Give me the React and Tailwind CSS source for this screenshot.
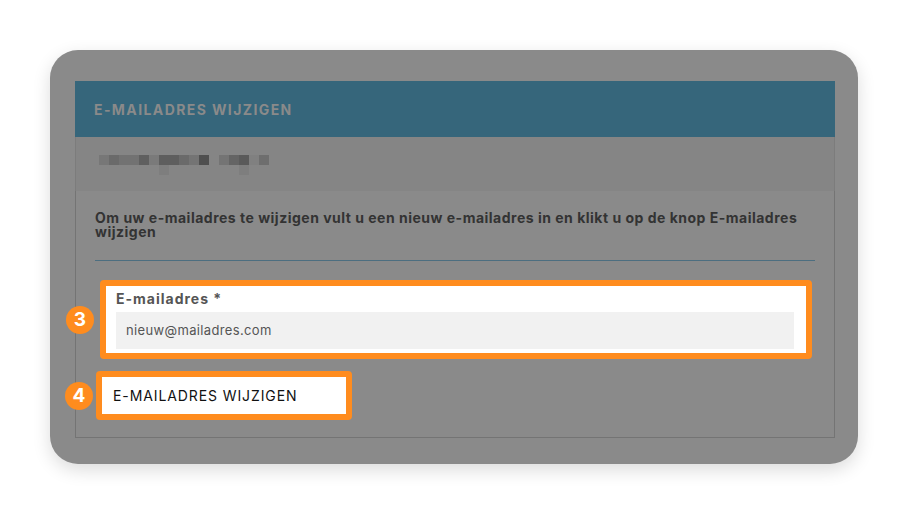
import React from "react";

const blocks1 = [
  ["w-[10px]", "bg-[#777777]"],
  ["w-[10px]", "bg-[#6a6a6a]"],
  ["w-[20px]", "bg-[#727272]"],
  ["w-[10px]", "bg-[#5f5f5f]"],
  ["w-[10px]", "bg-[#7a7a7a]"],
  ["w-[20px]", "bg-[#5e5e5e]"],
  ["w-[10px]", "bg-[#6a6a6a]"],
  ["w-[10px]", "bg-[#747474]"],
  ["w-[10px]", "bg-[#4f4f4f]"],
  ["w-[10px]", "bg-transparent"],
  ["w-[10px]", "bg-[#747474]"],
  ["w-[10px]", "bg-[#646464]"],
  ["w-[10px]", "bg-[#5a5a5a]"],
  ["w-[10px]", "bg-[#808080]"],
  ["w-[10px]", "bg-[#6e6e6e]"],
];

function Badge({ n }) {
  return (
    <div className="w-[28px] h-[28px] shrink-0 rounded-full bg-[#ff8c1e] flex items-center justify-center text-white text-[19px] font-bold leading-none font-['Inter',sans-serif]">
      {n}
    </div>
  );
}

export default function App() {
  return (
    <div className="w-[908px] h-[514px] bg-white pt-[50px] pl-[50px] font-['Inter',sans-serif]">
      <div className="w-[808px] h-[414px] rounded-[28px] bg-[#8a8a8a] shadow-[0_6px_18px_rgba(0,0,0,0.14)] pt-[31px] pl-[25px]">
        <div className="w-[760px] h-[357px] flex flex-col">
          <div className="h-[56px] bg-[#36667b] pl-[19px] flex items-center">
            <span className="text-[14px] font-bold text-[#8a8a8a] tracking-[1.4px] mt-[1px]">
              E-MAILADRES WIJZIGEN
            </span>
          </div>
          <div className="h-[54px] bg-[#858585] border-x border-[#7c7c7c] pl-[23px] pt-[18px]">
            <div className="flex h-[10px]">
              {blocks1.map(([w, c], i) => (
                <div key={i} className={`${w} h-[10px] ${c}`} />
              ))}
            </div>
            <div className="flex h-[10px]">
              <div className="w-[60px]" />
              <div className="w-[10px] h-[10px] bg-[#7e7e7e]" />
              <div className="w-[70px]" />
              <div className="w-[10px] h-[10px] bg-[#7e7e7e]" />
            </div>
          </div>
          <div className="flex-1 border-x border-b border-[#747474] px-[19px] pt-[20px]">
            <p className="text-[14px] font-bold leading-[14px] text-[#333333] tracking-[0.5px]">
              Om uw e-mailadres te wijzigen vult u een nieuw e-mailadres in en klikt u op de knop E-mailadres
              <br />
              wijzigen
            </p>
            <div className="mt-[21px] h-px bg-[#4c6e80]" />
            <div className="mt-[19px] flex items-center">
              <div className="-ml-[29px] mr-[6px]">
                <Badge n="3" />
              </div>
              <div className="w-[712px] h-[79px] rounded-[4px] bg-[#ff8c1e] p-[6px]">
                <div className="h-full bg-white pl-[10px] pr-[12px] pt-[4px]">
                  <div className="text-[14px] font-bold text-[#555555] leading-[18px] tracking-[1px]">E-mailadres *</div>
                  <div className="mt-[4px] h-[37px] bg-[#f1f1f1] pl-[10px] flex items-center text-[13px] text-[#555555] tracking-[0.35px]">
                    nieuw@mailadres.com
                  </div>
                </div>
              </div>
            </div>
            <div className="mt-[12px] flex items-center">
              <div className="-ml-[30px] mr-[3px]">
                <Badge n="4" />
              </div>
              <div className="w-[256px] h-[49px] rounded-[4px] bg-[#ff8c1e] p-[6px]">
                <div className="h-full bg-white pl-[11px] flex items-center text-[14px] text-[#111111] tracking-[0.9px]">
                  E-MAILADRES WIJZIGEN
                </div>
              </div>
            </div>
          </div>
        </div>
      </div>
    </div>
  );
}
